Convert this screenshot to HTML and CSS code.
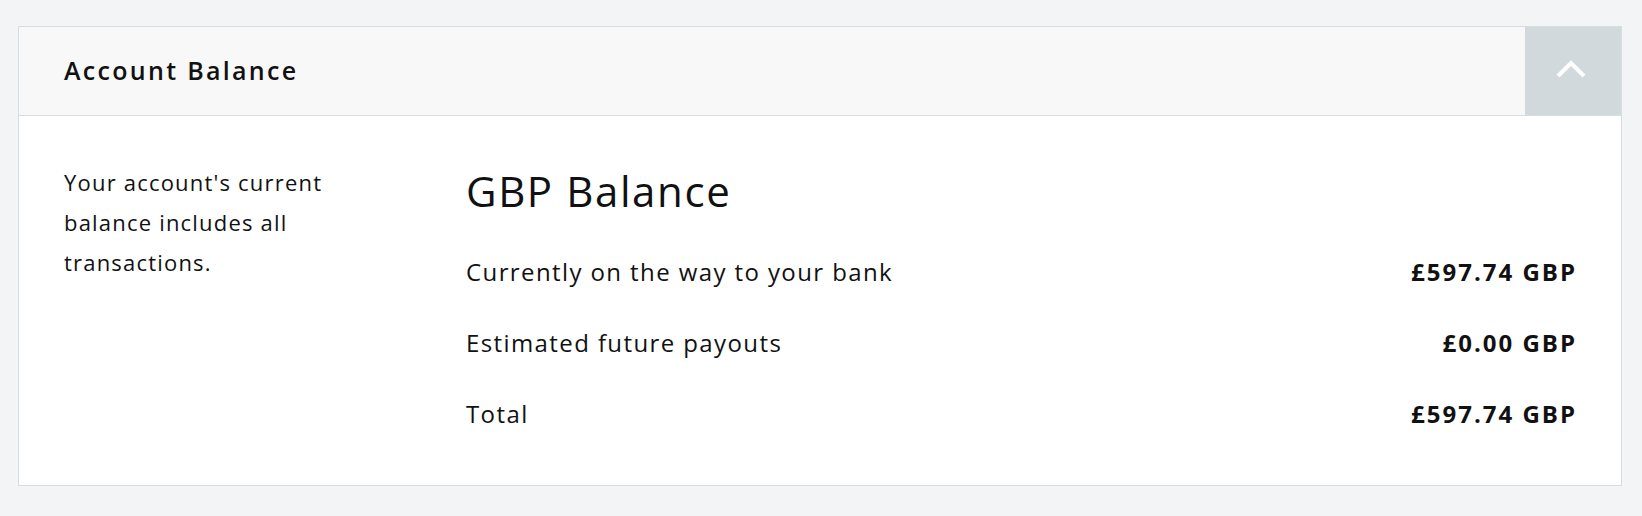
FILE: index.html
```html
<!DOCTYPE html>
<html lang="en">
<head>
<meta charset="utf-8">
<title>Account Balance</title>
<link rel="stylesheet" href="styles.css">
</head>
<body>
<div class="page">
  <section class="card">
    <header class="card-header">
      <h2 class="card-title">Account Balance</h2>
      <button class="toggle" type="button" aria-label="Collapse">
        <svg width="30" height="18" viewBox="0 0 30 18"><path d="M2 16 L15 3 L28 16" fill="none" stroke="#fff" stroke-width="4"/></svg>
      </button>
    </header>
    <div class="card-body">
      <p class="desc">Your account's current balance includes all transactions.</p>
      <div class="balance">
        <h3 class="balance-title">GBP Balance</h3>
        <div class="row"><span class="label">Currently on the way to your bank</span><span class="amount">£597.74 GBP</span></div>
        <div class="row"><span class="label">Estimated future payouts</span><span class="amount">£0.00 GBP</span></div>
        <div class="row"><span class="label">Total</span><span class="amount">£597.74 GBP</span></div>
      </div>
    </div>
  </section>
</div>
</body>
</html>
```
FILE: styles.css
```css
html, body {
  margin: 0;
  padding: 0;
  background: #f3f4f6;
}
body {
  font-family: "Open Sans", Lato, sans-serif;
  color: #111;
}
.page {
  padding: 26px 20px 30px 18px;
}
.card {
  background: #fff;
  border: 1px solid #d6dde2;
}
.card-header {
  display: flex;
  align-items: stretch;
  height: 88px;
  background: #f8f8f8;
  border-bottom: 1px solid #d6dde2;
}
.card-title {
  flex: 1;
  margin: 0;
  padding-left: 45px;
  padding-bottom: 2px;
  display: flex;
  align-items: center;
  font-size: 25px;
  font-weight: 600;
  letter-spacing: 2.3px;
}
.toggle {
  width: 96px;
  border: 0;
  padding: 0;
  background: #d2d9dd;
  display: flex;
  align-items: center;
  justify-content: center;
}
.toggle svg {
  margin-top: -4px;
  margin-left: -4px;
}
.card-body {
  display: flex;
  padding: 0 46px 0 45px;
  height: 369px;
}
.desc {
  width: 320px;
  margin: 46px 82px 0 0;
  font-size: 22px;
  line-height: 40px;
  letter-spacing: 1.2px;
}
.balance {
  flex: 1;
  padding-top: 47px;
}
.balance-title {
  margin: 0 0 34px;
  font-size: 42px;
  font-weight: 400;
  line-height: 56px;
  letter-spacing: 1.6px;
}
.row {
  display: flex;
  justify-content: space-between;
  align-items: baseline;
  height: 71px;
  line-height: 38px;
  font-size: 24px;
  letter-spacing: 1.4px;
}
.amount {
  font-weight: 700;
  letter-spacing: 2px;
  margin-right: -2px;
}
```
